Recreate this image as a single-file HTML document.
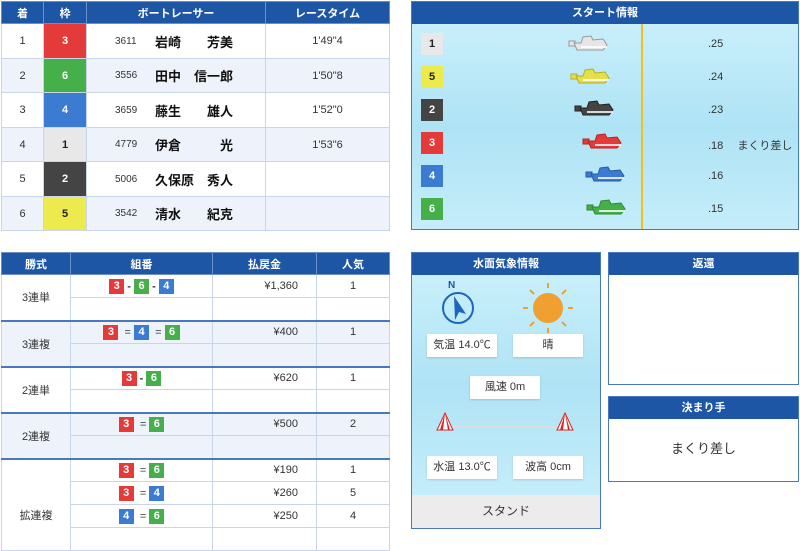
<!DOCTYPE html>
<html><head><meta charset="utf-8"><style>
*{box-sizing:border-box;margin:0;padding:0}
body{width:800px;height:530px;background:#fff;font-family:"Liberation Sans","Noto Sans CJK JP",sans-serif;font-size:11px;color:#333;position:relative;overflow:hidden}
.abs{position:absolute}
.hd{background:#1d56a5;color:#fff;font-weight:bold;font-size:11px;text-align:center;line-height:22px}
table{border-collapse:collapse;position:absolute;table-layout:fixed}
td,th{border:1px solid #c9d6ea;text-align:center}
th{background:#1d56a5;color:#fff;font-size:11px;height:22px;border-color:#6d8fc7}
.fr{color:#fff;font-weight:bold;font-size:11px}
.b1{background:#e8e8e8;color:#222!important}.b2{background:#444}.b3{background:#e53a3a}.b4{background:#3b7bd1}.b5{background:#ecea4c;color:#222!important}.b6{background:#45b04a}
.sq{display:inline-block;width:15px;height:15px;line-height:15px;text-align:center;color:#fff;font-weight:bold;font-size:11px;vertical-align:middle}
.alt td{background:#eef3fb}
.grp td{border-top:2px solid #4a78bd}
.water{background:linear-gradient(180deg,#c9effb,#aee3f5 50%,#c5edfa)}
.wb{position:absolute;background:#fff;width:70px;height:23px;line-height:23px;text-align:center;font-size:11px;box-shadow:0 1px 2px rgba(0,0,0,.15)}
.rc{text-align:left;padding-left:28px;white-space:nowrap}
.rc span{display:inline-block;width:40px;font-size:10px;vertical-align:middle}
.rc b{font-size:13px;color:#111;vertical-align:middle}
</style></head><body>

<table style="left:1px;top:1px;width:388px">
<colgroup><col style="width:42px"><col style="width:43px"><col style="width:179px"><col style="width:124px"></colgroup>
<tr><th>着</th><th>枠</th><th>ボートレーサー</th><th>レースタイム</th></tr>
<tr style="height:35px"><td>1</td><td class="fr b3">3</td><td class="rc"><span>3611</span><b>岩崎&emsp;&emsp;芳美</b></td><td>1'49"4</td></tr>
<tr class="alt" style="height:34px"><td>2</td><td class="fr b6" style="background:#45b04a">6</td><td class="rc"><span>3556</span><b>田中&emsp;信一郎</b></td><td>1'50"8</td></tr>
<tr style="height:35px"><td>3</td><td class="fr b4">4</td><td class="rc"><span>3659</span><b>藤生&emsp;&emsp;雄人</b></td><td>1'52"0</td></tr>
<tr class="alt" style="height:34px"><td>4</td><td class="fr b1" style="background:#e8e8e8">1</td><td class="rc"><span>4779</span><b>伊倉&emsp;&emsp;&emsp;光</b></td><td>1'53"6</td></tr>
<tr style="height:35px"><td>5</td><td class="fr b2">2</td><td class="rc"><span>5006</span><b>久保原&emsp;秀人</b></td><td></td></tr>
<tr class="alt" style="height:34px"><td>6</td><td class="fr b5" style="background:#ecea4c">5</td><td class="rc"><span>3542</span><b>清水&emsp;&emsp;紀克</b></td><td></td></tr>
</table>

<div class="abs" style="left:411px;top:1px;width:388px;height:229px;border:1px solid #4a78bd">
<div class="hd">スタート情報</div>
<div class="water" style="position:absolute;left:0;top:22px;width:386px;height:205px"></div>
<div class="abs" style="left:229px;top:22px;width:2px;height:205px;background:#f0c020"></div>
</div>
<svg class="abs" style="left:411px;top:0" width="389" height="230">
<defs><g id="boat"><rect x="0" y="5" width="6" height="5"/><path d="M5 7 L12 7 L14 1 L22 0 L24 4 L34 3 L38 9 L34 14 L8 14 Z"/></g></defs>
<g fill="#e6e6e6" stroke="#999" stroke-width="1"><use href="#boat" x="158" y="36"/></g>
<g fill="#e6df4a" stroke="#b5ad2a"><use href="#boat" x="160" y="69"/></g>
<g fill="#444" stroke="#222"><use href="#boat" x="164" y="101"/></g>
<g fill="#e53a3a" stroke="#b22"><use href="#boat" x="172" y="134"/></g>
<g fill="#3b7bd1" stroke="#245aa8"><use href="#boat" x="175" y="167"/></g>
<g fill="#45b04a" stroke="#2c8a31"><use href="#boat" x="176" y="200"/></g>
<g fill="#fff" opacity=".8"><rect x="170" y="46" width="26" height="2"/><rect x="172" y="79" width="26" height="2"/><rect x="176" y="111" width="26" height="2"/><rect x="184" y="144" width="26" height="2"/><rect x="187" y="177" width="26" height="2"/><rect x="188" y="210" width="26" height="2"/></g>
</svg>
<div class="abs fr b1" style="left:421px;top:33px;width:22px;height:22px;line-height:22px;text-align:center;color:#222">1</div>
<div class="abs fr b5" style="left:421px;top:66px;width:22px;height:22px;line-height:22px;text-align:center">5</div>
<div class="abs fr b2" style="left:421px;top:99px;width:22px;height:22px;line-height:22px;text-align:center">2</div>
<div class="abs fr b3" style="left:421px;top:132px;width:22px;height:22px;line-height:22px;text-align:center">3</div>
<div class="abs fr b4" style="left:421px;top:165px;width:22px;height:22px;line-height:22px;text-align:center">4</div>
<div class="abs fr b6" style="left:421px;top:198px;width:22px;height:22px;line-height:22px;text-align:center">6</div>
<div class="abs" style="left:708px;top:38px">.25</div>
<div class="abs" style="left:708px;top:71px">.24</div>
<div class="abs" style="left:708px;top:104px">.23</div>
<div class="abs" style="left:708px;top:137px">.18&emsp;&nbsp;まくり差し</div>
<div class="abs" style="left:708px;top:170px">.16</div>
<div class="abs" style="left:708px;top:203px">.15</div>

<table style="left:1px;top:252px;width:388px">
<colgroup><col style="width:69px"><col style="width:142px"><col style="width:104px"><col style="width:73px"></colgroup>
<tr><th>勝式</th><th>組番</th><th>払戻金</th><th>人気</th></tr>
<tr style="height:23px"><td rowspan="2">3連単</td><td><span class="sq b3">3</span> <b>-</b> <span class="sq b6">6</span> <b>-</b> <span class="sq b4">4</span></td><td style="text-align:right;padding-right:18px">¥1,360</td><td>1</td></tr>
<tr style="height:23px"><td></td><td></td><td></td></tr>
<tr class="alt grp" style="height:23px"><td rowspan="2">3連複</td><td><span class="sq b3">3</span> &nbsp;= <span class="sq b4">4</span> &nbsp;= <span class="sq b6">6</span></td><td style="text-align:right;padding-right:18px">¥400</td><td>1</td></tr>
<tr class="alt" style="height:23px"><td></td><td></td><td></td></tr>
<tr class="grp" style="height:23px"><td rowspan="2">2連単</td><td><span class="sq b3">3</span> <b>-</b> <span class="sq b6">6</span></td><td style="text-align:right;padding-right:18px">¥620</td><td>1</td></tr>
<tr style="height:23px"><td></td><td></td><td></td></tr>
<tr class="alt grp" style="height:23px"><td rowspan="2">2連複</td><td><span class="sq b3">3</span> &nbsp;= <span class="sq b6">6</span></td><td style="text-align:right;padding-right:18px">¥500</td><td>2</td></tr>
<tr class="alt" style="height:23px"><td></td><td></td><td></td></tr>
<tr class="grp" style="height:23px"><td rowspan="4" style="padding-top:20px">拡連複</td><td><span class="sq b3">3</span> &nbsp;= <span class="sq b6">6</span></td><td style="text-align:right;padding-right:18px">¥190</td><td>1</td></tr>
<tr style="height:23px"><td><span class="sq b3">3</span> &nbsp;= <span class="sq b4">4</span></td><td style="text-align:right;padding-right:18px">¥260</td><td>5</td></tr>
<tr style="height:23px"><td><span class="sq b4">4</span> &nbsp;= <span class="sq b6">6</span></td><td style="text-align:right;padding-right:18px">¥250</td><td>4</td></tr>
<tr style="height:23px"><td></td><td></td><td></td></tr>
</table>

<div class="abs" style="left:411px;top:252px;width:190px;height:277px;border:1px solid #4a78bd">
<div class="hd">水面気象情報</div>
<div class="water" style="position:absolute;left:0;top:22px;width:188px;height:220px"></div>
<div style="position:absolute;left:0;top:242px;width:188px;height:33px;background:#ececec;text-align:center;line-height:33px;font-size:12px">スタンド</div>
</div>
<svg class="abs" style="left:440px;top:275px" width="140" height="60">
<text x="8" y="13" font-size="10" font-weight="bold" fill="#1d56a5" font-family="Liberation Sans">N</text>
<circle cx="18" cy="33" r="15" fill="none" stroke="#1d66c0" stroke-width="2"/>
<path d="M14 21 L26 39 L19 37 L15 45 Z" fill="#1d66c0"/>
<g stroke="#f0a030" stroke-width="2">
<line x1="108" y1="8" x2="108" y2="13"/><line x1="108" y1="53" x2="108" y2="58"/><line x1="83" y1="33" x2="88" y2="33"/><line x1="128" y1="33" x2="133" y2="33"/>
<line x1="90" y1="15" x2="94" y2="19"/><line x1="122" y1="47" x2="126" y2="51"/><line x1="90" y1="51" x2="94" y2="47"/><line x1="122" y1="19" x2="126" y2="15"/>
</g>
<circle cx="108" cy="33" r="15" fill="#f0a030"/>
</svg>
<div class="wb" style="left:427px;top:334px">気温 14.0℃</div>
<div class="wb" style="left:513px;top:334px">晴</div>
<div class="wb" style="left:470px;top:376px">風速 0m</div>
<svg class="abs" style="left:435px;top:410px" width="140" height="24">
<line x1="12" y1="17" x2="128" y2="17" stroke="#ddd" stroke-width="2"/>
<path d="M2 20 L10 3 L18 20 Z" fill="#fff" stroke="#d22" stroke-width="1"/><path d="M5 20 L10 3 L8 20 Z M13 20 L10 3 L15 20Z" fill="#d22"/>
<path d="M122 20 L130 3 L138 20 Z" fill="#fff" stroke="#d22"/><path d="M125 20 L130 3 L128 20 Z M133 20 L130 3 L135 20Z" fill="#d22"/>
</svg>
<div class="wb" style="left:427px;top:456px">水温 13.0℃</div>
<div class="wb" style="left:513px;top:456px">波高 0cm</div>

<div class="abs" style="left:608px;top:252px;width:191px;height:133px;border:1px solid #4a78bd"><div class="hd">返還</div></div>
<div class="abs" style="left:608px;top:396px;width:191px;height:86px;border:1px solid #4a78bd"><div class="hd">決まり手</div>
<div style="text-align:center;font-size:13px;line-height:60px">まくり差し</div></div>
</body></html>
